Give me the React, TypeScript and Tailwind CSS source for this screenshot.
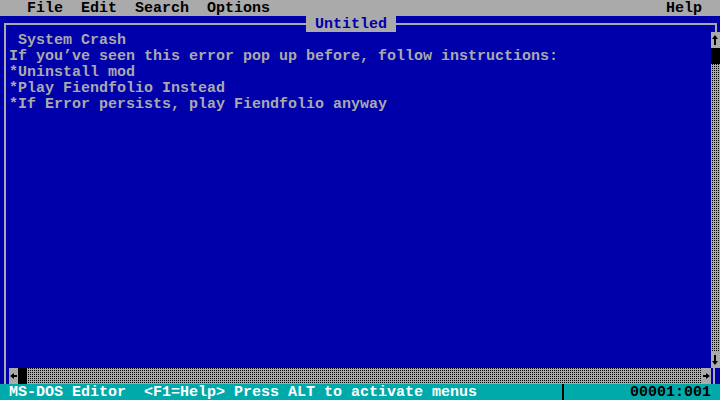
const BLUE = "bg-[#0000aa]";

function Arrow({ dir }: { dir: "up" | "down" | "left" | "right" }) {
  const paths: Record<string, string> = {
    up: "M4 3 L1 7 H3 V13 H5 V7 H7 Z",
    down: "M4 13 L1 9 H3 V3 H5 V9 H7 Z",
    left: "M1 8 L5 5 V7 H8 V9 H5 V11 Z",
    right: "M8 8 L4 5 V7 H1 V9 H4 V11 Z",
  };
  return (
    <svg width="9" height="16" viewBox="0 0 9 16" className="block">
      <path d={paths[dir]} fill="#000" />
    </svg>
  );
}

// light shade block, like the ░ glyph
const shade =
  "bg-[#aaaaaa] bg-[conic-gradient(#000_0_25%,#aaaaaa_0)] bg-[length:2px_2px]";

const lines = [
  " System Crash",
  "If you’ve seen this error pop up before, follow instructions:",
  "*Uninstall mod",
  "*Play Fiendfolio Instead",
  "*If Error persists, play Fiendfolio anyway",
];

export default function App() {
  return (
    <div className="w-[720px] h-[400px] overflow-hidden font-['Liberation_Mono',monospace] text-[15px] leading-[18px] font-bold whitespace-pre select-none">
      {/* Menu bar */}
      <div className="flex justify-between h-4 overflow-hidden bg-[#aaaaaa] text-black">
        <span>{"   File  Edit  Search  Options"}</span>
        <span>{"Help  "}</span>
      </div>

      {/* Title row */}
      <div className={`flex h-4 overflow-hidden ${BLUE}`}>
        <div className="w-[306px] pl-[4px] pt-[7px]">
          <div className="h-[9px] border-l-2 border-t-2 border-[#aaaaaa]" />
        </div>
        <div className="w-[90px] bg-[#aaaaaa] text-[#0000aa]">{" Untitled "}</div>
        <div className="flex-1 pr-[3px] pt-[7px]">
          <div className="h-[9px] border-r-2 border-t-2 border-[#aaaaaa]" />
        </div>
      </div>

      {/* Editing area */}
      <div className={`flex h-[336px] ${BLUE}`}>
        <div className="w-[9px] pl-[4px]">
          <div className="h-full border-l-2 border-[#aaaaaa]" />
        </div>
        <div className="flex-1 text-[#aaaaaa]">
          {lines.map((l, i) => (
            <div key={i} className="h-4 overflow-hidden">{l}</div>
          ))}
        </div>
        <div className="w-[9px] flex flex-col">
          <div className="h-4 bg-[#aaaaaa]"><Arrow dir="up" /></div>
          <div className="h-4 bg-black" />
          <div className={`flex-1 ${shade}`} />
          <div className="h-4 bg-[#aaaaaa]"><Arrow dir="down" /></div>
        </div>
      </div>

      {/* Horizontal scrollbar */}
      <div className={`flex h-4 ${BLUE}`}>
        <div className="w-[9px] pl-[4px]">
          <div className="h-full border-l-2 border-[#aaaaaa]" />
        </div>
        <div className="w-[9px] bg-[#aaaaaa]"><Arrow dir="left" /></div>
        <div className="w-[9px] bg-black" />
        <div className={`flex-1 ${shade}`} />
        <div className="w-[9px] bg-[#aaaaaa]"><Arrow dir="right" /></div>
        <div className="w-[9px] pl-[2px]">
          <div className="h-full border-l-2 border-[#aaaaaa]" />
        </div>
      </div>

      {/* Status bar */}
      <div className="flex h-4 overflow-hidden bg-[#00aaaa]">
        <div className="w-[558px] text-white">{" MS-DOS Editor  <F1=Help> Press ALT to activate menus"}</div>
        <div className="w-[9px] flex justify-center">
          <div className="w-[2px] h-full bg-black" />
        </div>
        <div className="flex-1 text-right text-black">{"00001:001 "}</div>
      </div>
    </div>
  );
}
